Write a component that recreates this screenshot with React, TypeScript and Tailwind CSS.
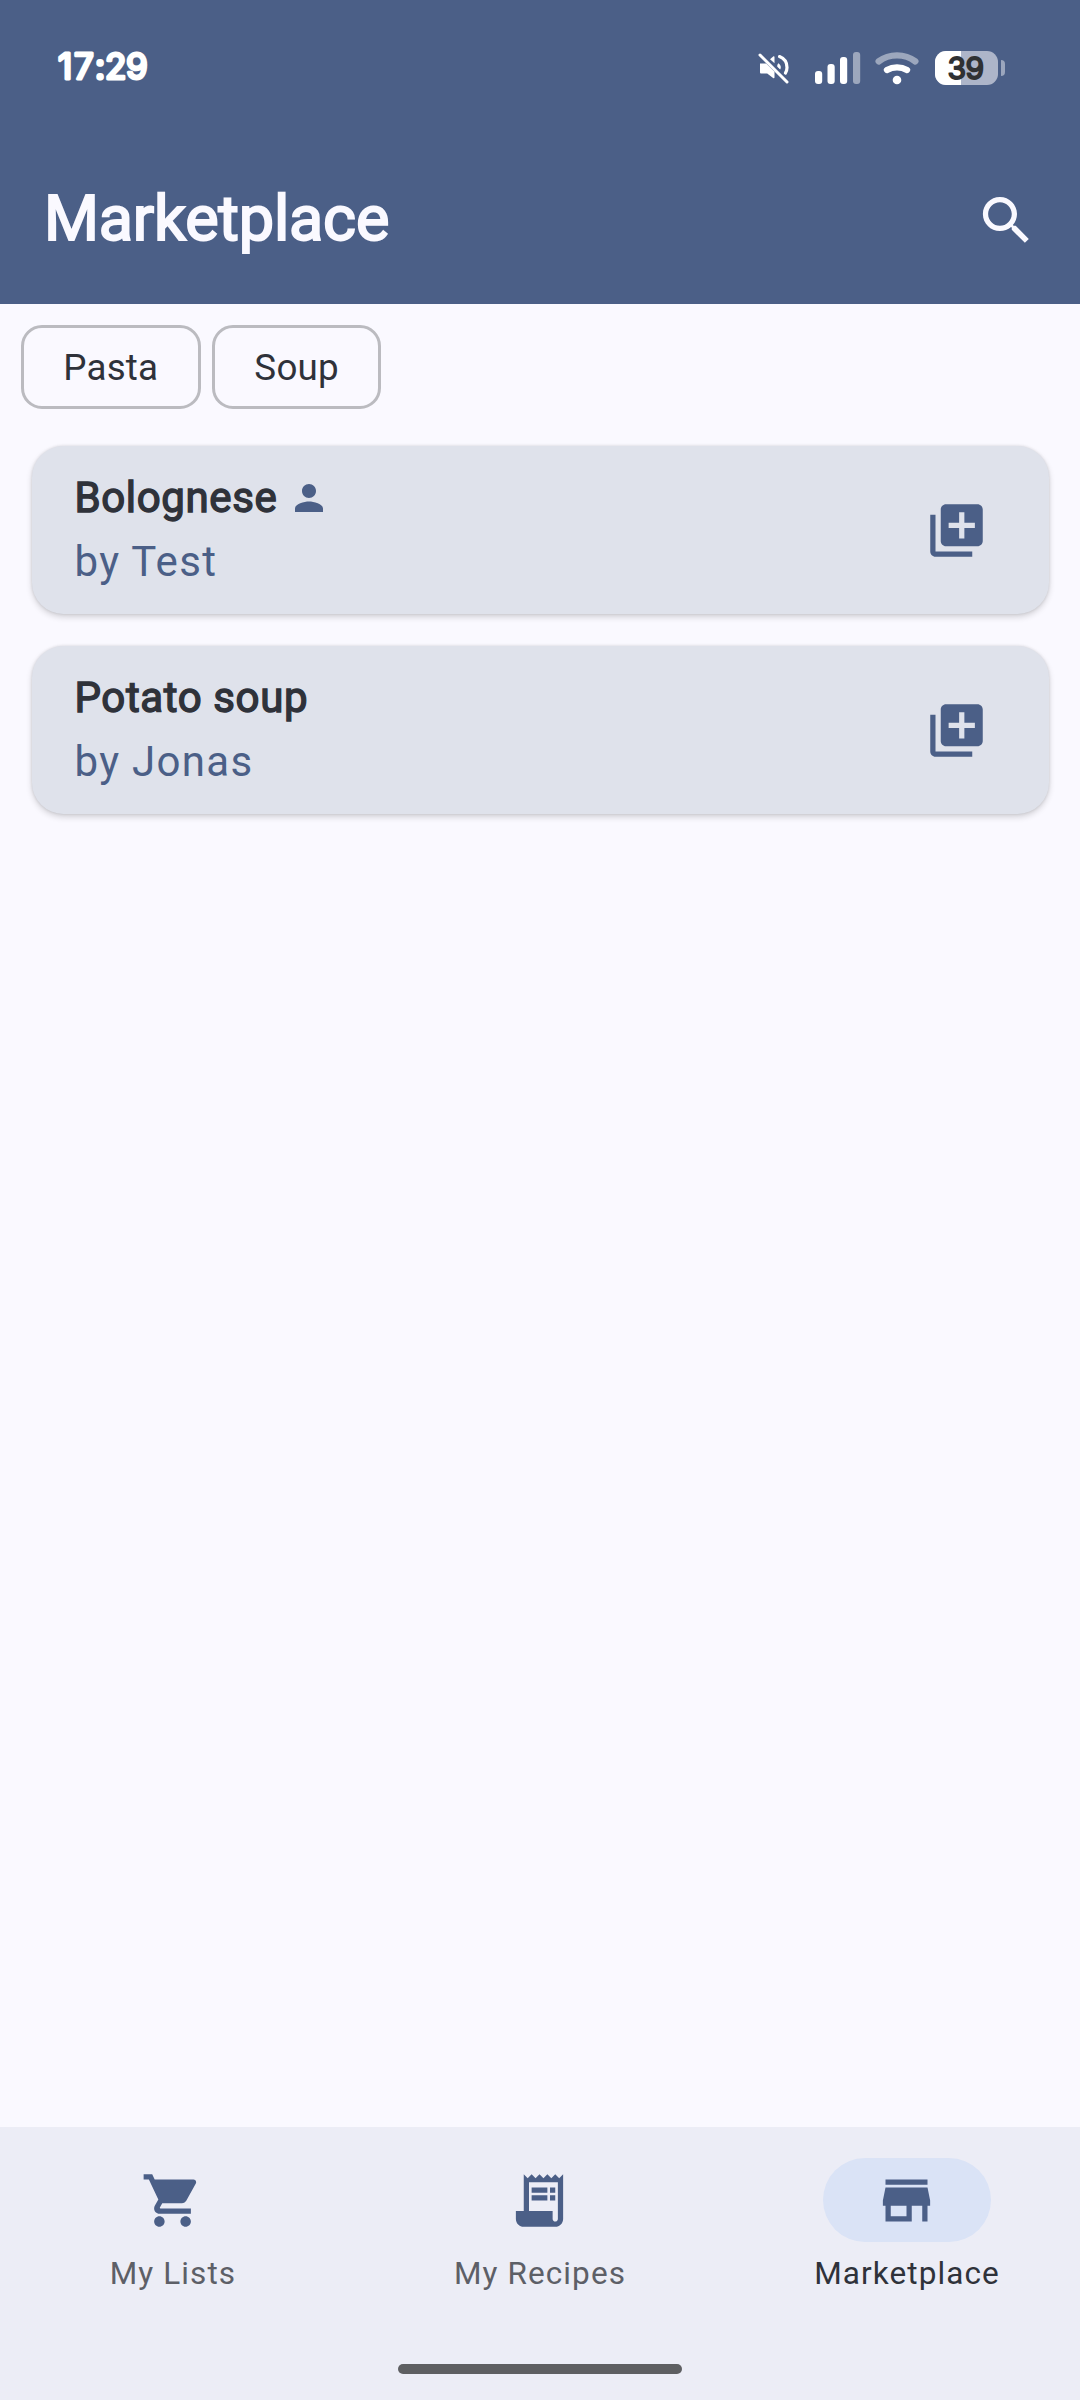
import type { ReactNode } from 'react';

type IconProps = { className?: string; children: ReactNode };

function Icon({ className = '', children }: IconProps) {
  return (
    <svg viewBox="0 0 24 24" fill="currentColor" className={`block shrink-0 ${className}`} aria-hidden="true">
      {children}
    </svg>
  );
}

const SearchIcon = () => (
  <Icon className="size-[63px]">
    <path d="M15.5 14h-.79l-.28-.27C15.41 12.59 16 11.11 16 9.5 16 5.91 13.09 3 9.5 3S3 5.91 3 9.5 5.91 16 9.5 16c1.61 0 3.09-.59 4.23-1.57l.27.28v.79l5 4.99L20.49 19l-4.99-5zm-6 0C7.01 14 5 11.99 5 9.5S7.01 5 9.5 5 14 7.01 14 9.5 11.99 14 9.5 14z" />
  </Icon>
);

const PersonIcon = () => (
  <Icon className="size-[42px] text-[#4b5f87]">
    <path d="M12 12c2.21 0 4-1.79 4-4s-1.79-4-4-4-4 1.79-4 4 1.79 4 4 4zm0 2c-2.67 0-8 1.34-8 4v2h16v-2c0-2.66-5.33-4-8-4z" />
  </Icon>
);

const LibraryAddIcon = () => (
  <Icon className="size-[63px]">
    <path d="M4 6H2v14c0 1.1.9 2 2 2h14v-2H4V6zm16-4H8c-1.100 0-2 .9-2 2v12c0 1.100.9 2 2 2h12c1.100 0 2-.9 2-2V4c0-1.100-.9-2-2-2zm-1 9h-4v4h-2v-4H9V9h4V5h2v4h4v2z" />
  </Icon>
);

const CartIcon = () => (
  <Icon className="-ml-[2px] size-[63px]">
    <path d="M7 18c-1.100 0-1.990.9-1.990 2S5.900 22 7 22s2-.9 2-2-.9-2-2-2zM1 2v2h2l3.600 7.590-1.350 2.450c-.16.28-.25.61-.25.96 0 1.100.9 2 2 2h12v-2H7.420c-.14 0-.25-.11-.25-.25l.03-.12.9-1.630h7.450c.75 0 1.410-.41 1.750-1.030l3.580-6.490c.08-.14.12-.31.12-.48 0-.55-.45-1-1-1H5.210l-.94-2H1zm16 16c-1.100 0-1.990.9-1.990 2s.89 2 1.990 2 2-.9 2-2-.9-2-2-2z" />
  </Icon>
);

const ReceiptIcon = () => (
  <Icon className="-ml-[2px] size-[63px]">
    <path d="M19.5 3.500 18 2l-1.500 1.500L15 2l-1.500 1.500L12 2l-1.500 1.500L9 2 7.500 3.500 6 2v14H3v3c0 1.660 1.340 3 3 3h12c1.660 0 3-1.340 3-3V2l-1.500 1.500zM19 19c0 .55-.45 1-1 1s-1-.45-1-1v-3H8V5h11v14z" />
    <path d="M9 7h6v2H9zM16 7h2v2h-2zM9 10h6v2H9zM16 10h2v2h-2z" />
  </Icon>
);

const StoreIcon = () => (
  <Icon className="-ml-[1px] size-[63px]">
    <path d="M20 4H4v2h16V4zm1 10v-2l-1-5H4l-1 5v2h1v6h10v-6h4v6h2v-6h1zm-9 4H6v-4h6v4z" />
  </Icon>
);

function MuteIcon() {
  return (
    <svg viewBox="0 0 32 32" className="block size-8" aria-hidden="true">
      <g fill="#fff">
        <path d="M2 11.500h6.200l8.300 8.300v5.700c0 .8-.8 1-1.400.5L9.200 21.500H3.300c-.8 0-1.300-.5-1.300-1.300z" />
        <path d="M12 7.200l3.200-2.700c.6-.5 1.300-.2 1.300.5v6.200z" />
        <path d="M20.300 11.200c1.500.8 2.500 2.300 2.500 4 0 .9-.2 1.700-.7 2.400l-2.600-2.700c-.4-.4-.5-2.200.8-3.700z" />
      </g>
      <path d="M21.500 4.600C26 6.400 29 10.600 29 15.500c0 2.300-.6 4-1.600 5.600" fill="none" stroke="#fff" strokeWidth="3.200" strokeLinecap="round" />
      <path d="M2 3 29 30" stroke="#fff" strokeWidth="3" strokeLinecap="round" />
      <path d="M4.600 1.600 30 27" stroke="#4b5f87" strokeWidth="1.300" />
    </svg>
  );
}

function SignalIcon() {
  return (
    <svg viewBox="0 0 46 34" className="block h-[34px] w-[46px]" aria-hidden="true">
      <g fill="#fff">
        <rect x="0" y="20" width="7.200" height="13" rx="3" />
        <rect x="12.500" y="13" width="7.200" height="20" rx="3" />
        <rect x="25" y="6" width="7.200" height="27" rx="3" />
        <rect x="38" y="1" width="7.200" height="32" rx="3" opacity=".45" />
      </g>
    </svg>
  );
}

function WifiIcon() {
  return (
    <svg viewBox="0 0 44 34" className="block h-[34px] w-11" fill="none" stroke="#fff" strokeLinecap="round" aria-hidden="true">
      <path d="M3.700 10.400c10.500-8.100 26.100-8.100 36.600 0" strokeWidth="6.400" opacity=".45" />
      <path d="M12 19c6-3.500 14-3.500 20 0" strokeWidth="6.400" />
      <circle cx="22" cy="29" r="4.300" fill="#fff" stroke="none" />
    </svg>
  );
}

function Battery() {
  return (
    <div className="flex items-center">
      <div className="relative h-[34px] w-[63px] rounded-[11px] bg-[#adb5c9]">
        <div className="absolute inset-y-0 left-0 w-[26px] rounded-l-[11px] bg-white" />
        <svg viewBox="0 -8 63 50" className="relative -mt-2 block h-[50px] w-[63px]">
          <text x="12.500 30.500" y="28" fontSize="30" className="fill-[#2f3133] stroke-[#2f3133] font-['Inter']" strokeWidth="1.800" strokeLinejoin="round">39</text>
        </svg>
      </div>
      <div className="ml-[3px] h-4 w-1 rounded-r-[4px] bg-[#9ba6bd]" />
    </div>
  );
}

function StatusBar() {
  return (
    <div className="flex h-[136px] items-center justify-between pr-[75px] pl-[56px]">
      <svg viewBox="0 -10 110 60" className="block h-[60px] w-[110px]">
        <text x="2 18 39 49 70" y="31" fontSize="35" className="fill-white stroke-white font-['Inter']" strokeWidth="3" strokeLinejoin="round">17:29</text>
      </svg>
      <div className="flex items-center">
        <MuteIcon />
        <div className="ml-[25px]"><SignalIcon /></div>
        <div className="ml-[14px]"><WifiIcon /></div>
        <div className="ml-4 h-[34px]"><Battery /></div>
      </div>
    </div>
  );
}

const Chip = ({ label }: { label: string }) => (
  <button className="h-[84px] rounded-[21px] border-[3px] border-[#bbbbc0] px-[39.300px] pt-[2px] text-[36.750px] leading-[52px] tracking-[0.2px] text-[#2f323a]">
    {label}
  </button>
);

function RecipeCard({ name, author, own }: { name: string; author: string; own?: boolean }) {
  return (
    <article className="flex h-[168px] items-center justify-between rounded-[31.500px] bg-[#dfe2eb] pr-[61px] pl-[43px] text-[42px] leading-[63px] shadow-[0_3px_6px_rgba(0,0,0,0.16),0_0_3px_rgba(0,0,0,0.12)]">
      <div>
        <h2 className="-mt-px mb-px flex items-center gap-[11px] tracking-[0.62px] text-[#2f323a] [-webkit-text-stroke:1.400px_#2f323a]">
          {name}
          {own && <PersonIcon />}
        </h2>
        <p className="tracking-[1.310px] text-[#4b5f87]">by {author}</p>
      </div>
      <button className="text-[#4b5f87]" aria-label="Add recipe"><LibraryAddIcon /></button>
    </article>
  );
}

function NavItem({ label, icon, active }: { label: string; icon: ReactNode; active?: boolean }) {
  return (
    <button className="flex flex-1 flex-col items-center gap-[11px]">
      <span className={`flex h-[84px] w-[168px] items-center justify-center rounded-full text-[#4b5f87] ${active ? 'bg-[#dae3f6]' : ''}`}>
        {icon}
      </span>
      <span className={`text-[31.500px] leading-[42px] tracking-[1.100px] ${active ? 'text-[#2f323a]' : 'text-[#5d5f67]'}`}>{label}</span>
    </button>
  );
}

export default function App() {
  return (
    <div className="flex h-[2400px] w-[1080px] flex-col bg-[#faf9ff] font-['Roboto',sans-serif]">
      <header className="h-[304px] bg-[#4b5f87] text-[#faf9ff]">
        <StatusBar />
        <div className="flex h-[168px] items-center justify-between pr-[42px] pl-[44px]">
          <h1 className="-mt-[2px] text-[63px] leading-[84px] tracking-[-0.2px] [-webkit-text-stroke:2px_#faf9ff]">Marketplace</h1>
          <button aria-label="Search"><SearchIcon /></button>
        </div>
      </header>
      <main className="flex-1">
        <div className="flex gap-[11.500px] px-[21px] pt-[21px]">
          <Chip label="Pasta" />
          <Chip label="Soup" />
        </div>
        <div className="flex flex-col gap-8 px-[31.500px] pt-[37px]">
          <RecipeCard name="Bolognese" author="Test" own />
          <RecipeCard name="Potato soup" author="Jonas" />
        </div>
      </main>
      <nav className="flex h-[273px] flex-col items-center justify-between bg-[#ecedf6] pt-[31px] pb-[26px]">
        <div className="flex w-full gap-[21px]">
          <NavItem label="My Lists" icon={<CartIcon />} />
          <NavItem label="My Recipes" icon={<ReceiptIcon />} />
          <NavItem label="Marketplace" icon={<StoreIcon />} active />
        </div>
        <div className="h-[10px] w-[284px] rounded-full bg-[#5e5f62]" />
      </nav>
    </div>
  );
}
